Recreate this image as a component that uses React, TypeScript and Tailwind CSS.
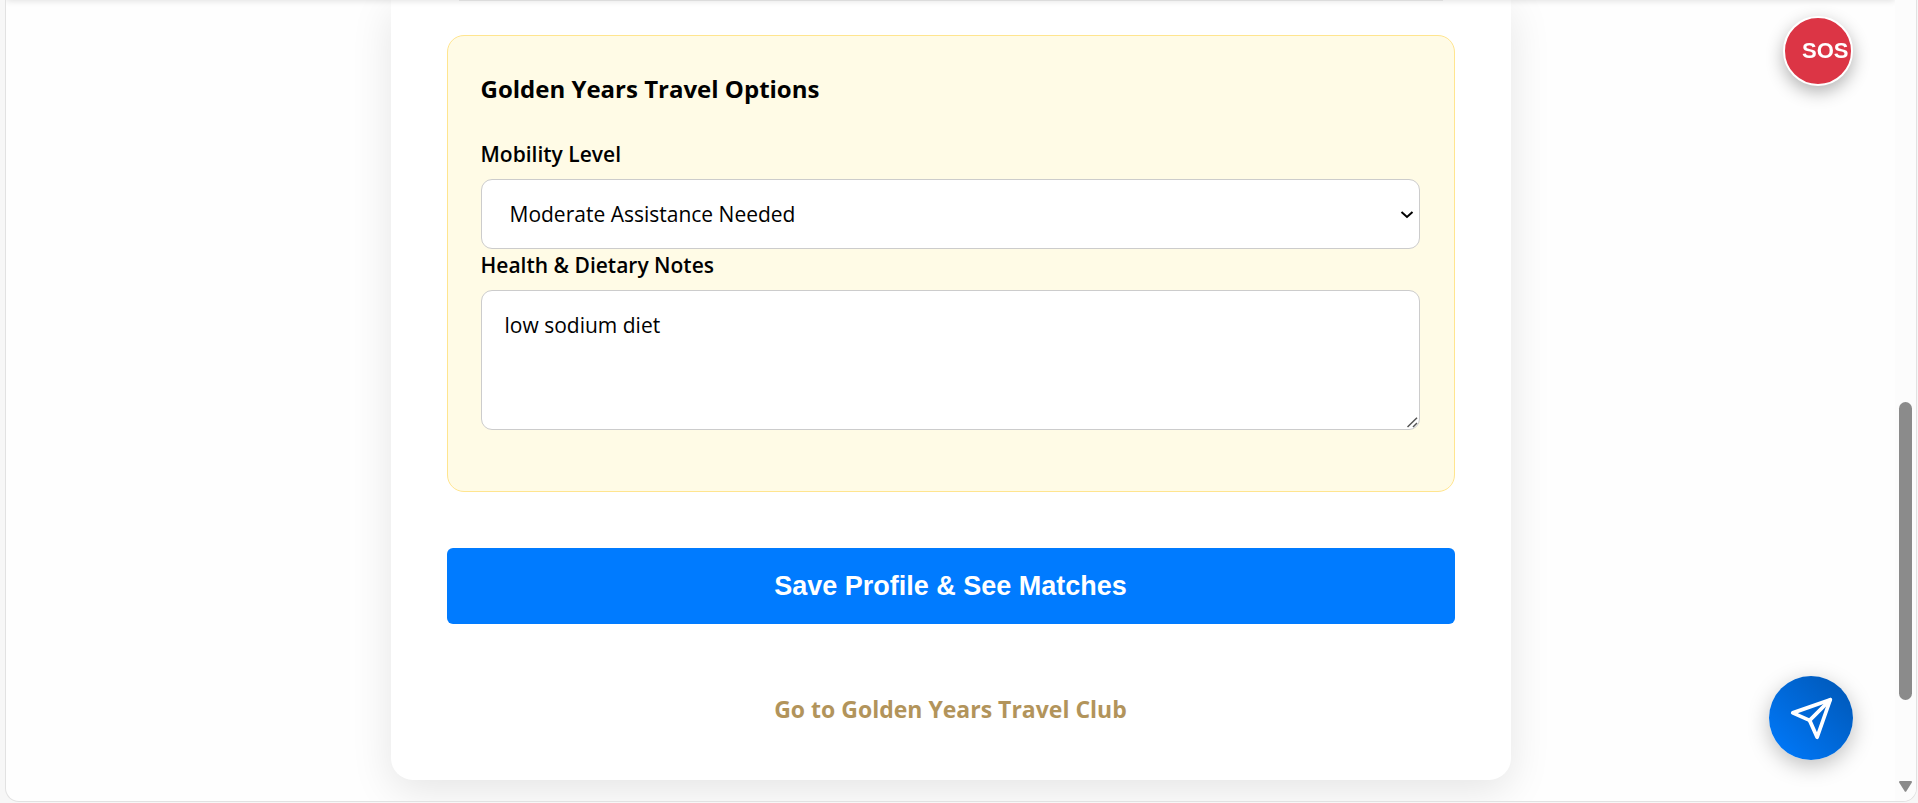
import { useState } from "react";

const sans = "font-['Open_Sans','Noto_Sans',sans-serif]";
const label = "block h-[41px] pb-2 text-[21px] leading-[33px] font-semibold";
const field =
  "block w-full rounded-[11px] border border-[#cccccc] bg-white text-[21px] text-black outline-none";

function Scrollbar() {
  return (
    <div aria-hidden="true" className="flex w-[21px] shrink-0 flex-col items-start bg-[#fcfcfc] pb-[9px] pl-1">
      <div className="grow-[402]" />
      <div className="w-[13px] grow-[298] rounded-full bg-[#8b8b8b]" />
      <div className="grow-[81]" />
      <svg width="13" height="11" viewBox="0 0 13 11" fill="#8b8b8b" stroke="#8b8b8b" strokeWidth="2" strokeLinejoin="round">
        <path d="M1 1h11L6.500 9.800z" />
      </svg>
    </div>
  );
}

export default function App() {
  const [mobility, setMobility] = useState("moderate");
  const [notes, setNotes] = useState("low sodium diet");

  return (
    <div className={`${sans} flex min-h-screen bg-[#f7f7f7] pr-px pb-px pl-[5px] text-black`}>
      <div className="flex grow overflow-hidden rounded-b-[14px] border-x border-b border-[#e2e2e2] bg-[#fefefe]">
        <div className="relative min-w-0 grow overflow-hidden">
          <div className="absolute inset-x-0 -top-2 z-10 h-2 shadow-[0_1px_6px_rgba(0,0,0,0.12)]" />

          <main className="mx-auto max-w-[1120px] rounded-b-[22px] bg-white px-14 pb-[50px] shadow-[0_11px_42px_rgba(0,0,0,0.1)]">
            <div className="mx-3 h-px bg-[#ececec]" />

            <form onSubmit={(e) => e.preventDefault()} className="pt-[34px]">
              <section className="rounded-[17px] border border-[#ffe58f] bg-[#fffbe6] pt-[33px] pr-[34px] pb-[61px] pl-[33px]">
                <h3 className="mb-[29px] text-[24px] leading-[40px] font-bold">
                  Golden Years Travel Options
                </h3>
                <label htmlFor="mobility" className={label}>
                  Mobility Level
                </label>
                <div className="relative">
                  <select
                    id="mobility"
                    value={mobility}
                    onChange={(e) => setMobility(e.target.value)}
                    className={`${field} h-[70px] appearance-none px-7 pt-0.5`}
                  >
                    <option value="independent">Fully Independent</option>
                    <option value="moderate">Moderate Assistance Needed</option>
                  </select>
                  <svg
                    aria-hidden="true"
                    className="pointer-events-none absolute top-8 right-1.5"
                    width="14"
                    height="8"
                    viewBox="0 0 14 8"
                    fill="none"
                    stroke="black"
                    strokeWidth="2"
                  >
                    <path d="M1.500 1 7 6 12.500 1" />
                  </svg>
                </div>
                <label htmlFor="notes" className={label}>
                  Health &amp; Dietary Notes
                </label>
                <div className="relative">
                  <textarea
                    id="notes"
                    value={notes}
                    onChange={(e) => setNotes(e.target.value)}
                    className={`${field} h-[140px] resize-y px-[23px] py-[19px] leading-[30px] [&::-webkit-resizer]:bg-transparent`}
                  />
                  <svg
                    aria-hidden="true"
                    className="pointer-events-none absolute right-0.5 bottom-0.5"
                    width="11"
                    height="11"
                    viewBox="0 0 11 11"
                    fill="none"
                    stroke="#555555"
                    strokeWidth="1.500"
                  >
                    <path d="M.5 10 10 .7M6 10 10 6" />
                  </svg>
                </div>
              </section>

              <button
                type="submit"
                className="mt-14 flex h-[76px] w-full items-center justify-center rounded-md bg-[#007bff] font-['Liberation_Sans',Arial,sans-serif] text-[27px] font-bold text-white"
              >
                Save Profile &amp; See Matches
              </button>
            </form>

            <div className="mt-[65px] pb-px text-center">
              <a href="#club" className="block text-[23px] leading-[40px] font-bold text-[#b2945b]">
                Go to Golden Years Travel Club
              </a>
            </div>
          </main>
        </div>
        <Scrollbar />
      </div>

      <button
        type="button"
        className="fixed top-4 right-[65px] z-20 flex size-[70px] items-center rounded-full border-2 border-white bg-[#dc3545] pb-0.5 pl-[17px] font-['Liberation_Sans',Arial,sans-serif] text-[22px] font-bold text-white shadow-[0_6px_17px_rgba(0,0,0,0.3)]"
      >
        SOS
      </button>

      <button
        type="button"
        aria-label="Send message"
        className="fixed right-[65px] bottom-[43px] z-20 flex size-[84px] items-center justify-center rounded-full bg-linear-45 from-[#007bff] to-[#0056b3] text-white shadow-[0_6px_21px_rgba(0,0,0,0.25)]"
      >
        <svg width="45" height="45" viewBox="0 0 24 24" fill="none" stroke="currentColor" strokeWidth="2" strokeLinecap="round" strokeLinejoin="round">
          <path d="M22 2 11 13" />
          <path d="M22 2 15 22 11 13 2 9z" />
        </svg>
      </button>
    </div>
  );
}
